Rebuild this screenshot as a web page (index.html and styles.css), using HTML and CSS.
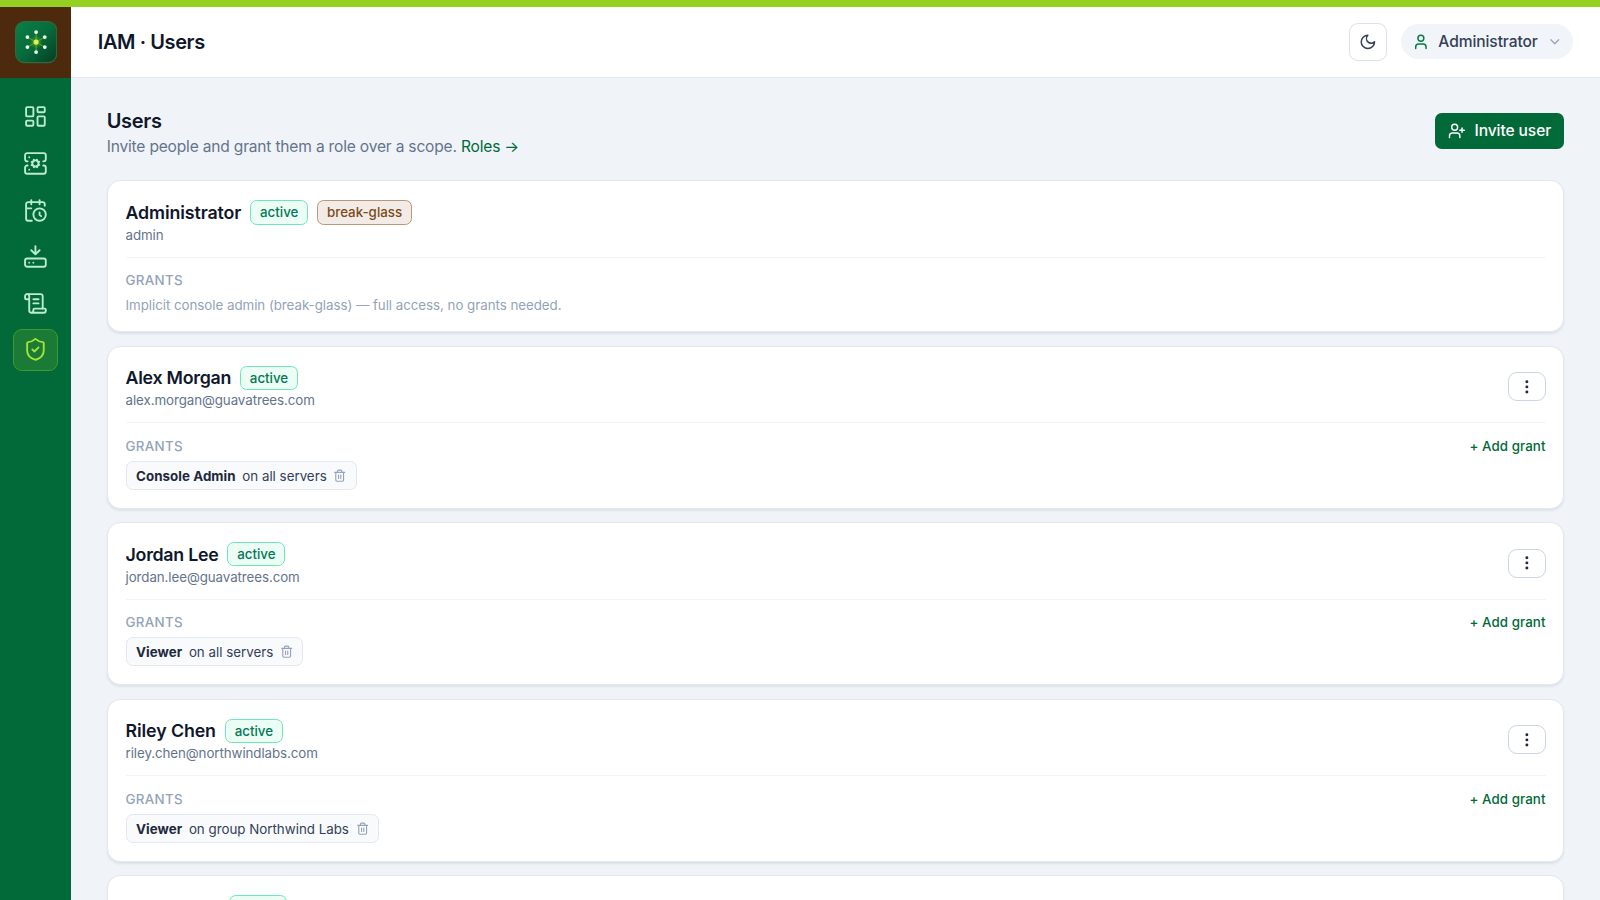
FILE: index.html
```html
<!DOCTYPE html>
<html lang="en">
<head>
<meta charset="utf-8">
<title>IAM · Users</title>
<link rel="stylesheet" href="styles.css">
</head>
<body>
<svg class="defs" width="0" height="0">
  <symbol id="trash" viewBox="0 0 24 24"><path d="M3 6h18M19 6v14a2 2 0 0 1-2 2H7a2 2 0 0 1-2-2V6M8 6V4a2 2 0 0 1 2-2h4a2 2 0 0 1 2 2v2M10 11v6M14 11v6"/></symbol>
  <symbol id="dots" viewBox="0 0 24 24"><circle cx="12" cy="5" r="1"/><circle cx="12" cy="12" r="1"/><circle cx="12" cy="19" r="1"/></symbol>
</svg>
<div class="topline"></div>
<div class="shell">
  <aside class="sidebar">
    <div class="brand">
      <svg class="logo" viewBox="0 0 38 38">
        <defs>
          <linearGradient id="lg" x1="0" y1="0" x2="1" y2="1"><stop offset="0" stop-color="#0a8046"/><stop offset="0.5" stop-color="#076b3c"/><stop offset="1" stop-color="#033d22"/></linearGradient>
          <radialGradient id="glow"><stop offset="0" stop-color="#a3e635" stop-opacity=".5"/><stop offset="1" stop-color="#84cc16" stop-opacity="0"/></radialGradient>
        </defs>
        <rect x=".5" y=".5" width="37" height="37" rx="8" fill="url(#lg)" stroke="#34683a"/>
        <circle cx="19" cy="19" r="6" fill="url(#glow)"/>
        <path d="M19 10v18M11.200 14.500l15.600 9M26.800 14.500l-15.600 9" stroke="#65a30d" stroke-width="1"/>
        <g fill="#ecfdf5"><circle cx="19" cy="10" r="1.700"/><circle cx="19" cy="28" r="1.700"/><circle cx="11.200" cy="14.500" r="1.700"/><circle cx="26.800" cy="23.500" r="1.700"/><circle cx="26.800" cy="14.500" r="1.700"/><circle cx="11.200" cy="23.500" r="1.700"/></g>
        <circle cx="19" cy="19" r="2.300" fill="#d9f25a"/>
      </svg>
    </div>
    <nav class="nav">
      <a class="nav-item"><svg class="icon" viewBox="0 0 24 24"><rect x="3" y="3" width="7" height="9" rx="1"/><rect x="14" y="3" width="7" height="5" rx="1"/><rect x="14" y="12" width="7" height="9" rx="1"/><rect x="3" y="16" width="7" height="5" rx="1"/></svg></a>
      <a class="nav-item"><svg class="icon" viewBox="0 0 24 24"><circle cx="12" cy="12" r="3"/><path d="M4.5 10H4a2 2 0 0 1-2-2V4a2 2 0 0 1 2-2h16a2 2 0 0 1 2 2v4a2 2 0 0 1-2 2h-.5M4.5 14H4a2 2 0 0 0-2 2v4a2 2 0 0 0 2 2h16a2 2 0 0 0 2-2v-4a2 2 0 0 0-2-2h-.5M6 6h.01M6 18h.01M15.7 13.4l-.9-.3M9.2 10.9l-.9-.3M10.6 15.7l.3-.9M13.6 15.7l-.4-1M10.8 9.3l-.4-1M8.3 13.6l1-.4M14.7 10.8l1-.4M13.4 8.3l-.3.9"/></svg></a>
      <a class="nav-item"><svg class="icon" viewBox="0 0 24 24"><path d="M21 7.5V6a2 2 0 0 0-2-2H5a2 2 0 0 0-2 2v14a2 2 0 0 0 2 2h3.5M16 2v4M8 2v4M3 10h5M17.5 17.5 16 16.3V14"/><circle cx="16" cy="16" r="6"/></svg></a>
      <a class="nav-item"><svg class="icon" viewBox="0 0 24 24"><path d="M12 2v8M16 6l-4 4-4-4M6 18h.01M10 18h.01"/><rect x="2" y="14" width="20" height="8" rx="2"/></svg></a>
      <a class="nav-item"><svg class="icon" viewBox="0 0 24 24"><path d="M15 12h-5M15 8h-5M19 17V5a2 2 0 0 0-2-2H4"/><path d="M8 21h12a2 2 0 0 0 2-2v-1a1 1 0 0 0-1-1H11a1 1 0 0 0-1 1v1a2 2 0 1 1-4 0V5a2 2 0 1 0-4 0v2a1 1 0 0 0 1 1h3"/></svg></a>
      <a class="nav-item active"><svg class="icon" viewBox="0 0 24 24"><path d="M20 13c0 5-3.500 7.500-7.660 8.950a1 1 0 0 1-.67-.01C7.500 20.500 4 18 4 13V6a1 1 0 0 1 1-1c2 0 4.500-1.200 6.240-2.720a1.170 1.170 0 0 1 1.520 0C14.510 3.810 17 5 19 5a1 1 0 0 1 1 1zM9 12l2 2 4-4"/></svg></a>
    </nav>
  </aside>
  <div class="column">
    <header class="header">
      <h1 class="title">IAM · Users</h1>
      <button class="theme"><svg class="icon" viewBox="0 0 24 24"><path d="M12 3a6 6 0 0 0 9 9 9 9 0 1 1-9-9Z"/></svg></button>
      <button class="account">
        <svg class="icon person" viewBox="0 0 24 24"><path d="M19 21v-2a4 4 0 0 0-4-4H9a4 4 0 0 0-4 4v2"/><circle cx="12" cy="7" r="4"/></svg>
        <span>Administrator</span>
        <svg class="icon chevron" viewBox="0 0 24 24"><path d="m6 9 6 6 6-6"/></svg>
      </button>
    </header>
    <main class="main">
      <div class="page-head">
        <div>
          <h2 class="title">Users</h2>
          <p class="sub">Invite people and grant them a role over a scope. <a class="link">Roles →</a></p>
        </div>
        <button class="invite"><svg class="icon" viewBox="0 0 24 24"><path d="M16 21v-2a4 4 0 0 0-4-4H6a4 4 0 0 0-4 4v2M19 8v6M22 11h-6"/><circle cx="9" cy="7" r="4"/></svg>Invite user</button>
      </div>
      <div class="cards">
        <section class="card">
          <div class="top"><div><div class="who"><h3 class="name">Administrator</h3><span class="badge">active</span><span class="badge brown">break-glass</span></div><p class="email">admin</p></div></div>
          <div class="grants"><div class="row"><span class="label">GRANTS</span></div><p class="note">Implicit console admin (break-glass) — full access, no grants needed.</p></div>
        </section>
        <section class="card">
          <div class="top"><div><div class="who"><h3 class="name tight">Alex Morgan</h3><span class="badge">active</span></div><p class="email">alex.morgan@guavatrees.com</p></div><button class="more"><svg class="icon"><use href="#dots"/></svg></button></div>
          <div class="grants"><div class="row"><span class="label">GRANTS</span><a class="add">+ Add grant</a></div><div class="chip"><b>Console Admin</b><span>on all servers</span><svg class="icon"><use href="#trash"/></svg></div></div>
        </section>
        <section class="card">
          <div class="top"><div><div class="who"><h3 class="name tight">Jordan Lee</h3><span class="badge">active</span></div><p class="email">jordan.lee@guavatrees.com</p></div><button class="more"><svg class="icon"><use href="#dots"/></svg></button></div>
          <div class="grants"><div class="row"><span class="label">GRANTS</span><a class="add">+ Add grant</a></div><div class="chip"><b>Viewer</b><span>on all servers</span><svg class="icon"><use href="#trash"/></svg></div></div>
        </section>
        <section class="card">
          <div class="top"><div><div class="who"><h3 class="name">Riley Chen</h3><span class="badge">active</span></div><p class="email">riley.chen@northwindlabs.com</p></div><button class="more"><svg class="icon"><use href="#dots"/></svg></button></div>
          <div class="grants"><div class="row"><span class="label">GRANTS</span><a class="add">+ Add grant</a></div><div class="chip"><b>Viewer</b><span>on group Northwind Labs</span><svg class="icon"><use href="#trash"/></svg></div></div>
        </section>
        <section class="card">
          <div class="top"><div class="who"><h3 class="name unnamed"></h3><span class="badge blank"></span></div></div>
        </section>
      </div>
    </main>
  </div>
</div>
</body>
</html>
```
FILE: styles.css
```css
* { box-sizing: border-box; margin: 0; padding: 0; }
html { overflow: hidden; height: 900px; }
body {
  zoom: 1.11111;
  width: 1440px;
  height: 810px;
  overflow: hidden;
  display: flex;
  flex-direction: column;
  background: #f0f4f9;
  color: #0f172a;
  font: 400 14px/20px Inter, "Liberation Sans", sans-serif;
}
button { font: inherit; color: inherit; border: 0; background: none; }
.defs { display: none; }
.icon { fill: none; stroke: currentColor; stroke-width: 2; stroke-linecap: round; stroke-linejoin: round; flex: none; }
.topline { height: 6px; flex: none; background: #94d122; }
.shell { display: flex; flex: 1; min-height: 0; }

.sidebar { width: 64px; flex: none; background: #016a38; }
.brand { height: 64px; display: flex; align-items: center; justify-content: center; padding: .5px 0 0 .4px; background: #4d2a0e; }
.logo { width: 38px; height: 38px; }
.nav { display: flex; flex-direction: column; gap: 4px; padding: 16px 12px; }
.nav-item { height: 38px; display: flex; align-items: center; justify-content: center; border: 1px solid transparent; border-radius: 8px; color: #bcecd0; }
.nav-item .icon { width: 22.400px; height: 22.400px; stroke-width: 1.8; }
.nav-item.active { color: #a3e635; background: #1a7a36; border-color: #3f9a30; }

.column { flex: 1; min-width: 0; display: flex; flex-direction: column; }
.header { height: 64px; flex: none; display: flex; align-items: center; gap: 12px; padding: 0 24px; background: #fff; border-bottom: 1px solid #e2e8f0; }
.title { font-size: 18px; line-height: 28px; font-weight: 600; letter-spacing: -.36px; }
.header .title { margin-right: auto; padding-top: 1.5px; }
.page-head .title { padding-top: 2px; line-height: 26px; letter-spacing: -.27px; }
.theme { width: 34px; height: 34px; display: flex; align-items: center; justify-content: center; border: 1px solid #dbe1ea; border-radius: 8px; color: #334155; }
.theme .icon { width: 16px; height: 16px; }
.account { height: 32px; display: flex; align-items: center; gap: 8px; padding: 0 10px; border-radius: 16px; background: #f1f5f9; color: #334155; font-weight: 500; letter-spacing: -.07px; }
.person { width: 16px; height: 16px; color: #047a45; }
.chevron { width: 14px; height: 14px; color: #94a3b8; }

.main { flex: 1; min-height: 0; overflow: hidden; padding: 24px 32px; }
.page-head { display: flex; align-items: center; justify-content: space-between; margin-bottom: 20.3px; }
.sub { color: #64748b; letter-spacing: -.165px; }
.link { color: #016a38; }
.invite { height: 32px; display: flex; align-items: center; gap: 8px; padding: 0 12px; border-radius: 6px; background: #016a38; color: #fff; font-weight: 500; letter-spacing: -.08px; }
.invite .icon { width: 16px; height: 16px; }

.cards { display: flex; flex-direction: column; gap: 12px; }
.card { padding: 16.1px; border: 1px solid #e2e8f0; border-radius: 12px; background: #fff; box-shadow: 0 1px 2px rgba(15, 23, 42, .08); }
.top { display: flex; align-items: center; justify-content: space-between; }
.who { display: flex; align-items: center; gap: 8px; height: 24px; }
.name { font-size: 16px; line-height: 24px; font-weight: 600; letter-spacing: -.09px; padding-top: 1.4px; }
.name.tight { letter-spacing: -.23px; }
.unnamed { width: 85.5px; }
.badge { padding: 2.7px 8px 1.4px; border: 1px solid #6ee7b7; border-radius: 6px; background: #ecfdf5; color: #047857; font-size: 12px; line-height: 16px; font-weight: 500; }
.badge.blank { width: 52px; height: 22px; }
.badge.brown { border-color: #b9977b; background: #f3ece6; color: #7c4a1a; }
.email { padding-top: 1.1px; margin-bottom: -1.1px; font-size: 12px; line-height: 16px; color: #64748b; letter-spacing: -.07px; }
.more { width: 34px; height: 26px; display: flex; align-items: center; justify-content: center; border: 1px solid #cbd5e1; border-radius: 8px; color: #1e293b; }
.more .icon { width: 16px; height: 16px; }
.grants { margin-top: 11.9px; padding-top: 13.2px; border-top: 1px solid #f1f5f9; font-size: 12px; line-height: 16px; }
.row { display: flex; justify-content: space-between; margin-bottom: 4.8px; }
.label { color: #94a3b8; font-weight: 500; letter-spacing: .3px; }
.add { color: #016a38; font-weight: 500; letter-spacing: .07px; }
.note { color: #94a3b8; letter-spacing: -.035px; padding-top: 1px; margin-bottom: -1px; }
.chip { display: inline-flex; vertical-align: top; align-items: center; gap: 6px; padding: 4.2px 8.2px 4.1px 8.5px; border: 1px solid #e2e8f0; border-radius: 6px; background: #f8fafc; color: #334155; }
.chip b, .chip span { padding-top: 1px; margin-bottom: -1px; }
.chip b { font-weight: 700; color: #1e293b; letter-spacing: .06px; }
.chip .icon { width: 12px; height: 12px; color: #94a3b8; }
```
